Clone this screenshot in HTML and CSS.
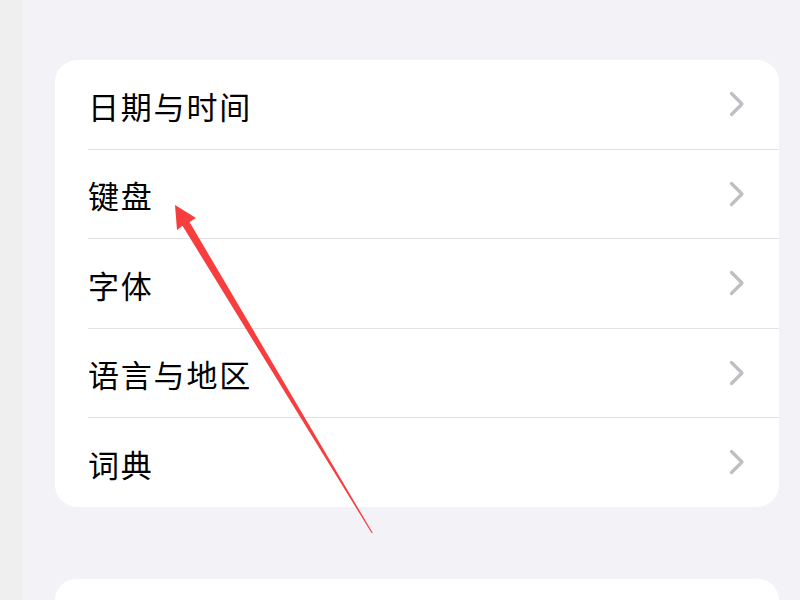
FILE: index.html
```html
<!DOCTYPE html>
<html lang="zh-CN">
<head>
<meta charset="utf-8">
<link rel="stylesheet" href="styles.css">
</head>
<body>
<div class="page">
  <div class="side"></div>
  <main class="main">
    <section class="card">
      <div class="row"><div class="cell"><span class="label">日期与时间</span><svg class="chev" viewBox="0 0 16 26"><path d="M2.5 2.5 L13 13 L2.5 23.5"/></svg></div></div>
      <div class="row"><div class="cell"><span class="label">键盘</span><svg class="chev" viewBox="0 0 16 26"><path d="M2.5 2.5 L13 13 L2.5 23.5"/></svg></div></div>
      <div class="row"><div class="cell"><span class="label">字体</span><svg class="chev" viewBox="0 0 16 26"><path d="M2.5 2.5 L13 13 L2.5 23.5"/></svg></div></div>
      <div class="row"><div class="cell"><span class="label">语言与地区</span><svg class="chev" viewBox="0 0 16 26"><path d="M2.5 2.5 L13 13 L2.5 23.5"/></svg></div></div>
      <div class="row"><div class="cell"><span class="label">词典</span><svg class="chev" viewBox="0 0 16 26"><path d="M2.5 2.5 L13 13 L2.5 23.5"/></svg></div></div>
    </section>
    <section class="card card-next"></section>
  </main>
  <svg class="arrow" viewBox="0 0 800 600" width="800" height="600">
    <polygon points="175,205 196,218 189.5,222 372.8,533 371.6,533 182.5,225.8 177,230"/>
  </svg>
</div>
</body>
</html>
```

FILE: styles.css
```css
html, body {
  margin: 0;
  padding: 0;
  height: 100%;
  overflow: hidden;
}
body {
  background: #f2f2f7;
  font-family: "Noto Sans CJK SC", "Noto Sans", sans-serif;
}
.page {
  display: flex;
  height: 600px;
  position: relative;
  overflow: hidden;
}
.side {
  width: 22px;
  flex: none;
  background: #efefef;
}
.main {
  flex: 1;
  padding: 60px 21px 0 33px;
  display: flex;
  flex-direction: column;
  gap: 72px;
}
.card {
  flex: none;
  background: #ffffff;
  border-radius: 22px;
  overflow: hidden;
}
.card-next {
  height: 21px;
  border-radius: 22px 22px 0 0;
}
.row {
  padding-left: 33px;
}
.cell {
  height: 88.5px;
  display: flex;
  align-items: center;
  justify-content: space-between;
  padding-right: 34px;
  border-bottom: 1px solid #e2e2e4;
}
.row:last-child .cell {
  border-bottom: none;
}
.label {
  font-size: 31px;
  color: #000;
  letter-spacing: 1.8px;
  line-height: 1;
  margin-top: 2px;
}
.chev {
  width: 16px;
  height: 26px;
  fill: none;
  stroke: #bfbfc3;
  stroke-width: 3.2;
  stroke-linecap: round;
  stroke-linejoin: round;
}
.arrow {
  position: absolute;
  left: 0;
  top: 0;
  pointer-events: none;
}
.arrow polygon {
  fill: #f73d3d;
}
```
